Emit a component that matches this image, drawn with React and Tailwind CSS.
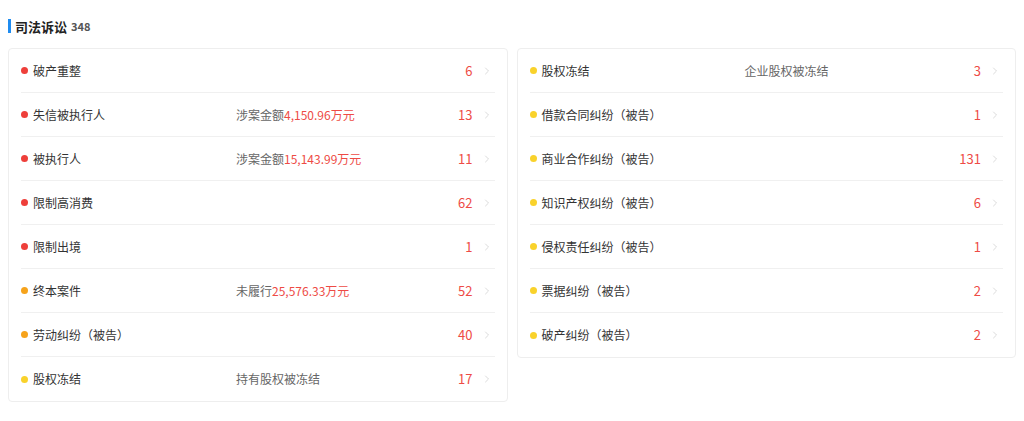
import React from "react";
import { ChevronRight } from "lucide-react";

const RED = "bg-[#ee3f3a]";
const ORANGE = "bg-[#f6a31b]";
const YELLOW = "bg-[#f9d22b]";

const leftRows = [
  { name: "破产重整", dot: RED, count: 6 },
  { name: "失信被执行人", dot: RED, label: "涉案金额", amount: "4,150.96万元", count: 13 },
  { name: "被执行人", dot: RED, label: "涉案金额", amount: "15,143.99万元", count: 11 },
  { name: "限制高消费", dot: RED, count: 62 },
  { name: "限制出境", dot: RED, count: 1 },
  { name: "终本案件", dot: ORANGE, label: "未履行", amount: "25,576.33万元", count: 52 },
  { name: "劳动纠纷（被告）", dot: ORANGE, count: 40 },
  { name: "股权冻结", dot: YELLOW, label: "持有股权被冻结", count: 17 },
];

const rightRows = [
  { name: "股权冻结", dot: YELLOW, label: "企业股权被冻结", count: 3 },
  { name: "借款合同纠纷（被告）", dot: YELLOW, count: 1 },
  { name: "商业合作纠纷（被告）", dot: YELLOW, count: 131 },
  { name: "知识产权纠纷（被告）", dot: YELLOW, count: 6 },
  { name: "侵权责任纠纷（被告）", dot: YELLOW, count: 1 },
  { name: "票据纠纷（被告）", dot: YELLOW, count: 2 },
  { name: "破产纠纷（被告）", dot: YELLOW, count: 2 },
];

const Row = ({ row, last }) => (
  <div
    className={`mx-3 h-11 flex items-center text-[12px] ${
      last ? "" : "border-b border-[#f0f0f0]"
    }`}
  >
    <span className={`w-[7px] h-[7px] rounded-full ${row.dot} shrink-0`} />
    <span className="ml-[5px] w-[203px] shrink-0 text-[#333]">{row.name}</span>
    <span className="flex-1 text-[#666]">
      {row.label}
      {row.amount && <span className="text-[#ee4b45]">{row.amount}</span>}
    </span>
    <span className="text-[13px] text-[#ee4b45]">{row.count}</span>
    <ChevronRight className="w-3 h-3 ml-2 mr-0.5 text-[#cfcfcf]" strokeWidth={1.5} />
  </div>
);

const Card = ({ rows }) => (
  <div className="border border-[#eeeeee] rounded bg-white">
    {rows.map((r, i) => (
      <Row key={i} row={r} last={i === rows.length - 1} />
    ))}
  </div>
);

export default function App() {
  return (
    <div
      className="w-[1024px] h-[421px] bg-white px-2 pt-[19px]"
      style={{ fontFamily: '"Noto Sans CJK SC", "Noto Sans", sans-serif' }}
    >
      <div className="flex items-center h-[14px]">
        <span className="w-[3px] h-[14px] bg-[#1f8cf0]" />
        <span className="ml-[4px] text-[13px] font-bold text-[#222] leading-none">司法诉讼</span>
        <span className="ml-1 text-[11px] font-bold text-[#555] leading-none">348</span>
      </div>
      <div className="mt-[15px] grid grid-cols-2 gap-[9px] items-start">
        <Card rows={leftRows} />
        <Card rows={rightRows} />
      </div>
    </div>
  );
}
